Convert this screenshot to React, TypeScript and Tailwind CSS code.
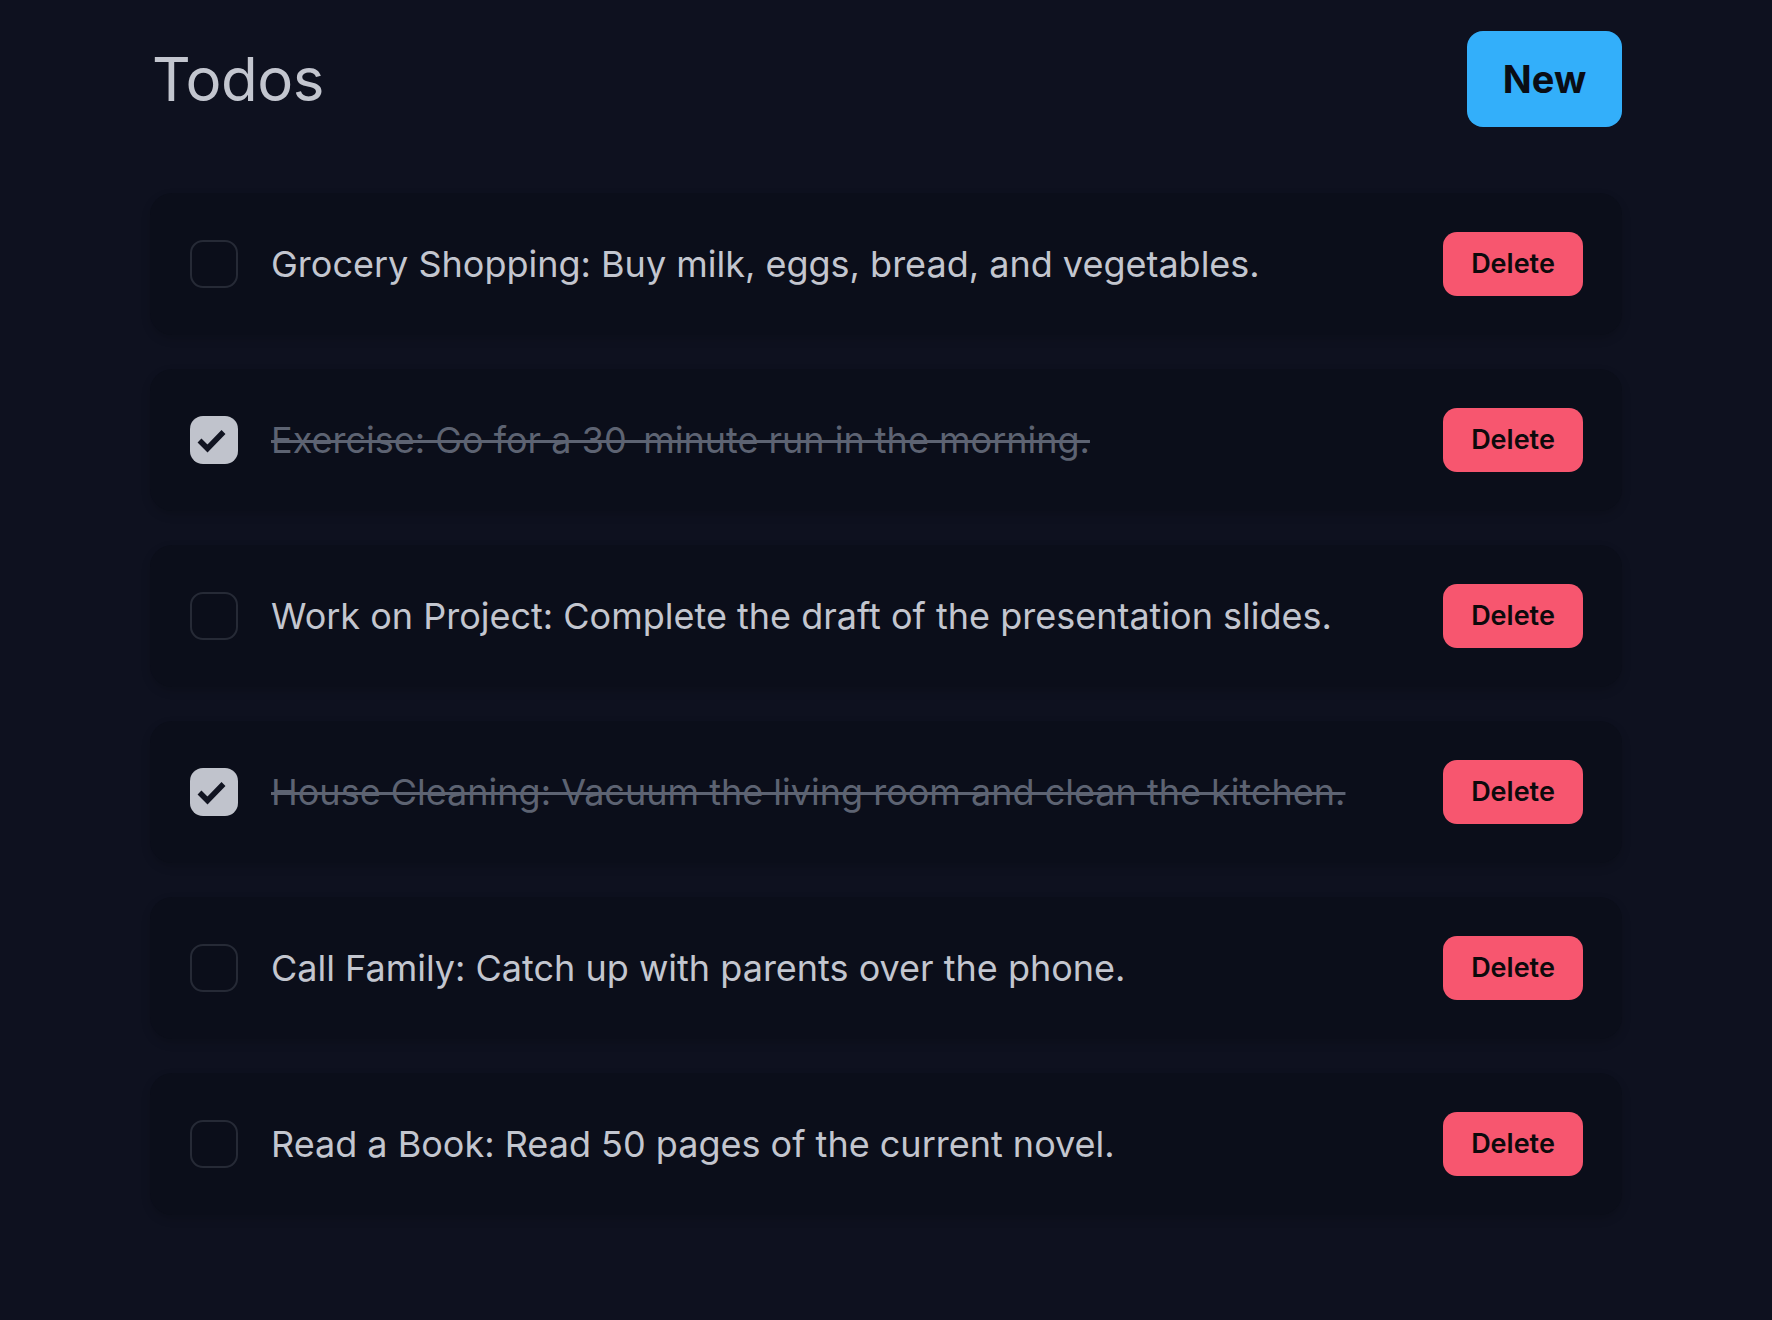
import React, { useState } from 'react';

interface Todo {
  id: number;
  text: string;
  done: boolean;
}

const initialTodos: Todo[] = [
  { id: 1, text: 'Grocery Shopping: Buy milk, eggs, bread, and vegetables.', done: false },
  { id: 2, text: 'Exercise: Go for a 30-minute run in the morning.', done: true },
  { id: 3, text: 'Work on Project: Complete the draft of the presentation slides.', done: false },
  { id: 4, text: 'House Cleaning: Vacuum the living room and clean the kitchen.', done: true },
  { id: 5, text: 'Call Family: Catch up with parents over the phone.', done: false },
  { id: 6, text: 'Read a Book: Read 50 pages of the current novel.', done: false },
];

const App: React.FC = () => {
  const [todos, setTodos] = useState<Todo[]>(initialTodos);

  const toggle = (id: number) =>
    setTodos(todos.map((t) => (t.id === id ? { ...t, done: !t.done } : t)));

  const remove = (id: number) => setTodos(todos.filter((t) => t.id !== id));

  return (
    <div className="min-h-screen bg-[#0e111f] font-['Inter',sans-serif]">
      <div className="mx-auto w-[1472px] pt-[31px]">
        {/* Header */}
        <div className="flex items-center justify-between mb-[66px]">
          <h1 className="text-[60px] font-normal text-[#c3c6cf] pl-[2px] tracking-[-0.5px]">Todos</h1>
          <button className="h-[96px] w-[155px] rounded-[16px] bg-[#33affa] text-[38px] font-bold text-[#0a0d14]">
            New
          </button>
        </div>

        {/* List */}
        <div className="flex flex-col gap-[34px]">
          {todos.map((todo) => (
            <div
              key={todo.id}
              className="flex items-center justify-between rounded-[22px] bg-[#0b0e1a] pl-[40px] pr-[39px] py-[39px] shadow-[0_4px_10px_rgba(0,0,0,0.15)]"
            >
              <div className="flex items-center gap-[33px]">
                <button
                  onClick={() => toggle(todo.id)}
                  className={`flex h-[48px] w-[48px] items-center justify-center rounded-[13px] ${
                    todo.done ? 'bg-[#c0c3cc]' : 'border-2 border-[#262a36]'
                  }`}
                >
                  {todo.done && (
                    <svg width="48" height="48" viewBox="0 0 48 48" fill="none" stroke="#111421" strokeWidth="5.5" strokeLinecap="butt">
                      <path d="M9.5 24.5l8 8L33.5 16" />
                    </svg>
                  )}
                </button>
                <span
                  className={`text-[36px] leading-none ${
                    todo.done ? 'text-[#5d6372] line-through decoration-[3px]' : 'text-[#c3c6cf]'
                  }`}
                >
                  {todo.text}
                </span>
              </div>
              <button
                onClick={() => remove(todo.id)}
                className="h-[64px] w-[140px] rounded-[14px] bg-[#f7566f] text-[27px] font-semibold text-[#0d0a0c]"
              >
                Delete
              </button>
            </div>
          ))}
        </div>
      </div>
    </div>
  );
};

export default App;
